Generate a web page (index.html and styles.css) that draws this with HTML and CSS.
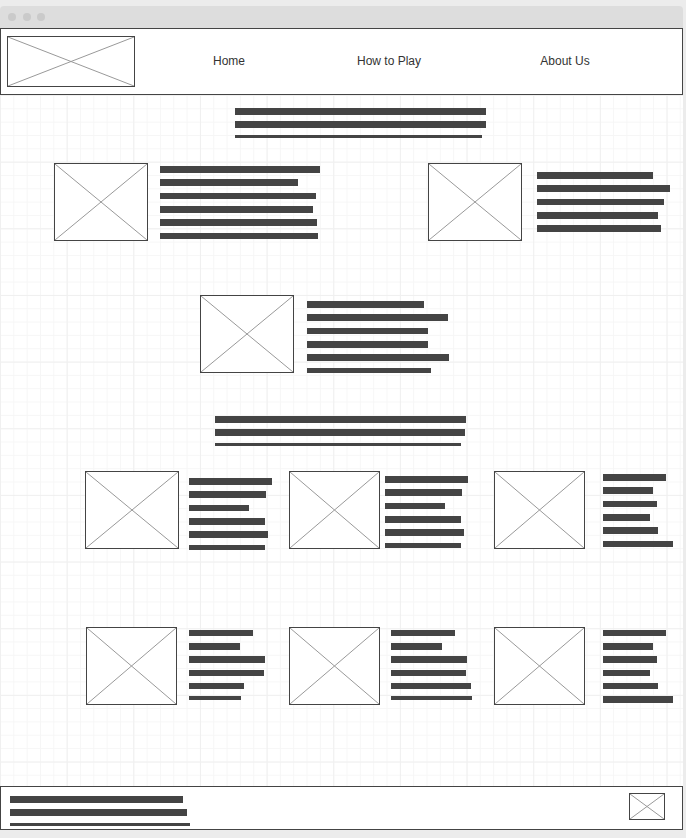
FILE: index.html
```html
<!DOCTYPE html>
<html lang="en">
<head>
<meta charset="utf-8">
<title>Wireframe</title>
<link rel="stylesheet" href="styles.css">
</head>
<body>
<div class="window">
  <div class="titlebar"><span class="dot"></span><span class="dot"></span><span class="dot"></span></div>
  <header class="header">
    <div class="ph logo"><svg viewBox="0 0 100 100" preserveAspectRatio="none"><line x1="0" y1="0" x2="100" y2="100" vector-effect="non-scaling-stroke"/><line x1="100" y1="0" x2="0" y2="100" vector-effect="non-scaling-stroke"/></svg></div>
    <nav class="nav">
      <a class="nav-item">Home</a>
      <a class="nav-item n2">How to Play</a>
      <a class="nav-item n3">About Us</a>
    </nav>
  </header>
  <main class="canvas">
    <div class="heading h-top">
      <div class="bar" style="width:251px"></div>
      <div class="bar" style="width:251px"></div>
      <div class="bar t3" style="width:247px"></div>
    </div>

    <div class="row row-a">
      <div class="blk a1">
        <div class="ph img"><svg viewBox="0 0 100 100" preserveAspectRatio="none"><line x1="0" y1="0" x2="100" y2="100" vector-effect="non-scaling-stroke"/><line x1="100" y1="0" x2="0" y2="100" vector-effect="non-scaling-stroke"/></svg></div>
        <div class="bars a1-bars">
          <div class="bar" style="width:160px"></div>
          <div class="bar" style="width:138px"></div>
          <div class="bar" style="width:156px"></div>
          <div class="bar" style="width:153px"></div>
          <div class="bar" style="width:157px"></div>
          <div class="bar" style="width:158px"></div>
        </div>
      </div>
      <div class="blk">
        <div class="ph img"><svg viewBox="0 0 100 100" preserveAspectRatio="none"><line x1="0" y1="0" x2="100" y2="100" vector-effect="non-scaling-stroke"/><line x1="100" y1="0" x2="0" y2="100" vector-effect="non-scaling-stroke"/></svg></div>
        <div class="bars a2-bars">
          <div class="bar" style="width:116px"></div>
          <div class="bar" style="width:133px"></div>
          <div class="bar" style="width:127px"></div>
          <div class="bar" style="width:121px"></div>
          <div class="bar" style="width:124px"></div>
        </div>
      </div>
    </div>

    <div class="row row-b">
      <div class="blk">
        <div class="ph img"><svg viewBox="0 0 100 100" preserveAspectRatio="none"><line x1="0" y1="0" x2="100" y2="100" vector-effect="non-scaling-stroke"/><line x1="100" y1="0" x2="0" y2="100" vector-effect="non-scaling-stroke"/></svg></div>
        <div class="bars b-bars">
          <div class="bar" style="width:117px"></div>
          <div class="bar" style="width:141px"></div>
          <div class="bar" style="width:121px"></div>
          <div class="bar" style="width:121px"></div>
          <div class="bar" style="width:142px"></div>
          <div class="bar t5" style="width:124px"></div>
        </div>
      </div>
    </div>

    <div class="heading h-mid">
      <div class="bar" style="width:251px"></div>
      <div class="bar" style="width:250px"></div>
      <div class="bar t3" style="width:246px"></div>
    </div>

    <div class="row row-c">
      <div class="blk c1">
        <div class="ph img"><svg viewBox="0 0 100 100" preserveAspectRatio="none"><line x1="0" y1="0" x2="100" y2="100" vector-effect="non-scaling-stroke"/><line x1="100" y1="0" x2="0" y2="100" vector-effect="non-scaling-stroke"/></svg></div>
        <div class="bars c1-bars">
          <div class="bar" style="width:83px"></div>
          <div class="bar" style="width:77px"></div>
          <div class="bar" style="width:60px"></div>
          <div class="bar" style="width:76px"></div>
          <div class="bar" style="width:79px"></div>
          <div class="bar t5" style="width:76px"></div>
        </div>
      </div>
      <div class="blk c2">
        <div class="ph img narrow"><svg viewBox="0 0 100 100" preserveAspectRatio="none"><line x1="0" y1="0" x2="100" y2="100" vector-effect="non-scaling-stroke"/><line x1="100" y1="0" x2="0" y2="100" vector-effect="non-scaling-stroke"/></svg></div>
        <div class="bars c2-bars">
          <div class="bar" style="width:83px"></div>
          <div class="bar" style="width:77px"></div>
          <div class="bar" style="width:60px"></div>
          <div class="bar" style="width:76px"></div>
          <div class="bar" style="width:79px"></div>
          <div class="bar t5" style="width:76px"></div>
        </div>
      </div>
      <div class="blk">
        <div class="ph img narrow"><svg viewBox="0 0 100 100" preserveAspectRatio="none"><line x1="0" y1="0" x2="100" y2="100" vector-effect="non-scaling-stroke"/><line x1="100" y1="0" x2="0" y2="100" vector-effect="non-scaling-stroke"/></svg></div>
        <div class="bars c3-bars">
          <div class="bar" style="width:63px"></div>
          <div class="bar" style="width:50px"></div>
          <div class="bar" style="width:54px"></div>
          <div class="bar" style="width:47px"></div>
          <div class="bar" style="width:55px"></div>
          <div class="bar" style="width:70px"></div>
        </div>
      </div>
    </div>

    <div class="row row-d">
      <div class="blk d1">
        <div class="ph img narrow"><svg viewBox="0 0 100 100" preserveAspectRatio="none"><line x1="0" y1="0" x2="100" y2="100" vector-effect="non-scaling-stroke"/><line x1="100" y1="0" x2="0" y2="100" vector-effect="non-scaling-stroke"/></svg></div>
        <div class="bars d1-bars">
          <div class="bar" style="width:64px"></div>
          <div class="bar" style="width:51px"></div>
          <div class="bar" style="width:76px"></div>
          <div class="bar" style="width:75px"></div>
          <div class="bar" style="width:55px"></div>
          <div class="bar t4" style="width:52px"></div>
        </div>
      </div>
      <div class="blk d2">
        <div class="ph img narrow"><svg viewBox="0 0 100 100" preserveAspectRatio="none"><line x1="0" y1="0" x2="100" y2="100" vector-effect="non-scaling-stroke"/><line x1="100" y1="0" x2="0" y2="100" vector-effect="non-scaling-stroke"/></svg></div>
        <div class="bars d2-bars">
          <div class="bar" style="width:64px"></div>
          <div class="bar" style="width:51px"></div>
          <div class="bar" style="width:76px"></div>
          <div class="bar" style="width:75px"></div>
          <div class="bar" style="width:80px"></div>
          <div class="bar t4" style="width:81px"></div>
        </div>
      </div>
      <div class="blk">
        <div class="ph img narrow"><svg viewBox="0 0 100 100" preserveAspectRatio="none"><line x1="0" y1="0" x2="100" y2="100" vector-effect="non-scaling-stroke"/><line x1="100" y1="0" x2="0" y2="100" vector-effect="non-scaling-stroke"/></svg></div>
        <div class="bars c3-bars">
          <div class="bar" style="width:63px"></div>
          <div class="bar" style="width:50px"></div>
          <div class="bar" style="width:54px"></div>
          <div class="bar" style="width:47px"></div>
          <div class="bar" style="width:55px"></div>
          <div class="bar" style="width:70px"></div>
        </div>
      </div>
    </div>
  </main>
  <footer class="footer">
    <div class="bars foot-bars">
      <div class="bar" style="width:173px"></div>
      <div class="bar" style="width:177px"></div>
      <div class="bar t3" style="width:180px"></div>
    </div>
    <div class="ph ficon"><svg viewBox="0 0 100 100" preserveAspectRatio="none"><line x1="0" y1="0" x2="100" y2="100" vector-effect="non-scaling-stroke"/><line x1="100" y1="0" x2="0" y2="100" vector-effect="non-scaling-stroke"/></svg></div>
  </footer>
</div>
</body>
</html>
```

FILE: styles.css
```css
* { box-sizing: border-box; }

html, body {
  margin: 0;
  padding: 0;
}

body {
  width: 686px;
  height: 838px;
  overflow: hidden;
  background: #ececec;
  font-family: "Liberation Sans", Arial, sans-serif;
}

.window {
  width: 683px;
  padding-top: 6px;
}

.titlebar {
  height: 22px;
  background: #dddddd;
  border-radius: 4px 4px 0 0;
  display: flex;
  align-items: center;
  gap: 6.5px;
  padding-left: 8px;
}

.dot {
  width: 8px;
  height: 8px;
  border-radius: 50%;
  background: #cacaca;
}

.header {
  height: 67px;
  border: 1px solid #444;
  background: #fff;
  display: flex;
  align-items: center;
}

.ph {
  border: 1px solid #444;
  background: #fff;
  flex: none;
}

.ph svg {
  display: block;
  width: 100%;
  height: 100%;
}

.ph line {
  stroke: #999;
  stroke-width: 1;
}

.logo {
  width: 128px;
  height: 51px;
  margin-left: 6px;
}

.nav {
  display: flex;
  margin-left: 34px;
  padding-bottom: 2px;
}

.nav-item {
  width: 120px;
  text-align: center;
  font-size: 12px;
  color: #333;
  line-height: 14px;
}

.nav-item.n2 { margin-left: 40px; }
.nav-item.n3 { margin-left: 56px; }

.canvas {
  height: 691px;
  background-color: #fff;
  background-image:
    linear-gradient(to right, #f0f0f0 1px, transparent 1px),
    linear-gradient(to bottom, #f0f0f0 1px, transparent 1px),
    linear-gradient(to right, #f6f6f6 1px, transparent 1px),
    linear-gradient(to bottom, #f6f6f6 1px, transparent 1px);
  background-size:
    66.667px 66.667px,
    66.667px 66.667px,
    13.333px 13.333px,
    13.333px 13.333px;
  display: flex;
  flex-direction: column;
  align-items: flex-start;
}

.heading {
  display: flex;
  flex-direction: column;
  gap: 6.667px;
  height: 30px;
}

.h-top { margin: 13px 0 0 235px; }
.h-mid { margin: 43px 0 0 215px; }

.bars {
  display: flex;
  flex-direction: column;
  gap: 6.667px;
}

.bar {
  height: 6.667px;
  background: #444;
}

.bar.t3 { height: 3px; }
.bar.t4 { height: 4px; }
.bar.t5 { height: 5px; }

.row {
  display: flex;
  align-items: flex-start;
}

.blk {
  display: flex;
  align-items: flex-start;
}

.img {
  width: 94px;
  height: 78px;
}

.img.narrow { width: 91px; }

.row-a { margin-top: 25px; padding-left: 54px; }
.a1 { width: 374px; }
.a1-bars { margin: 3px 0 0 12px; }
.a2-bars { margin: 9px 0 0 15px; }

.row-b { margin-top: 54px; padding-left: 200px; }
.b-bars { margin: 6px 0 0 13px; }

.row-c { margin-top: 25px; padding-left: 85px; }
.c1 { width: 204px; }
.c2 { width: 205px; }
.c1-bars { margin: 7px 0 0 10px; }
.c2-bars { margin: 5px 0 0 5px; }
.c3-bars { margin: 3px 0 0 18px; }

.row-d { margin-top: 77px; padding-left: 86px; }
.d1 { width: 203px; }
.d2 { width: 205px; }
.d1-bars { margin: 3px 0 0 12px; }
.d2-bars { margin: 3px 0 0 11px; }

.footer {
  height: 44px;
  border: 1px solid #444;
  background: #fff;
  display: flex;
  justify-content: space-between;
  align-items: flex-start;
}

.foot-bars { padding: 9px 0 0 9px; }

.ficon {
  width: 36px;
  height: 27px;
  margin: 6px 17px 0 0;
}
```
